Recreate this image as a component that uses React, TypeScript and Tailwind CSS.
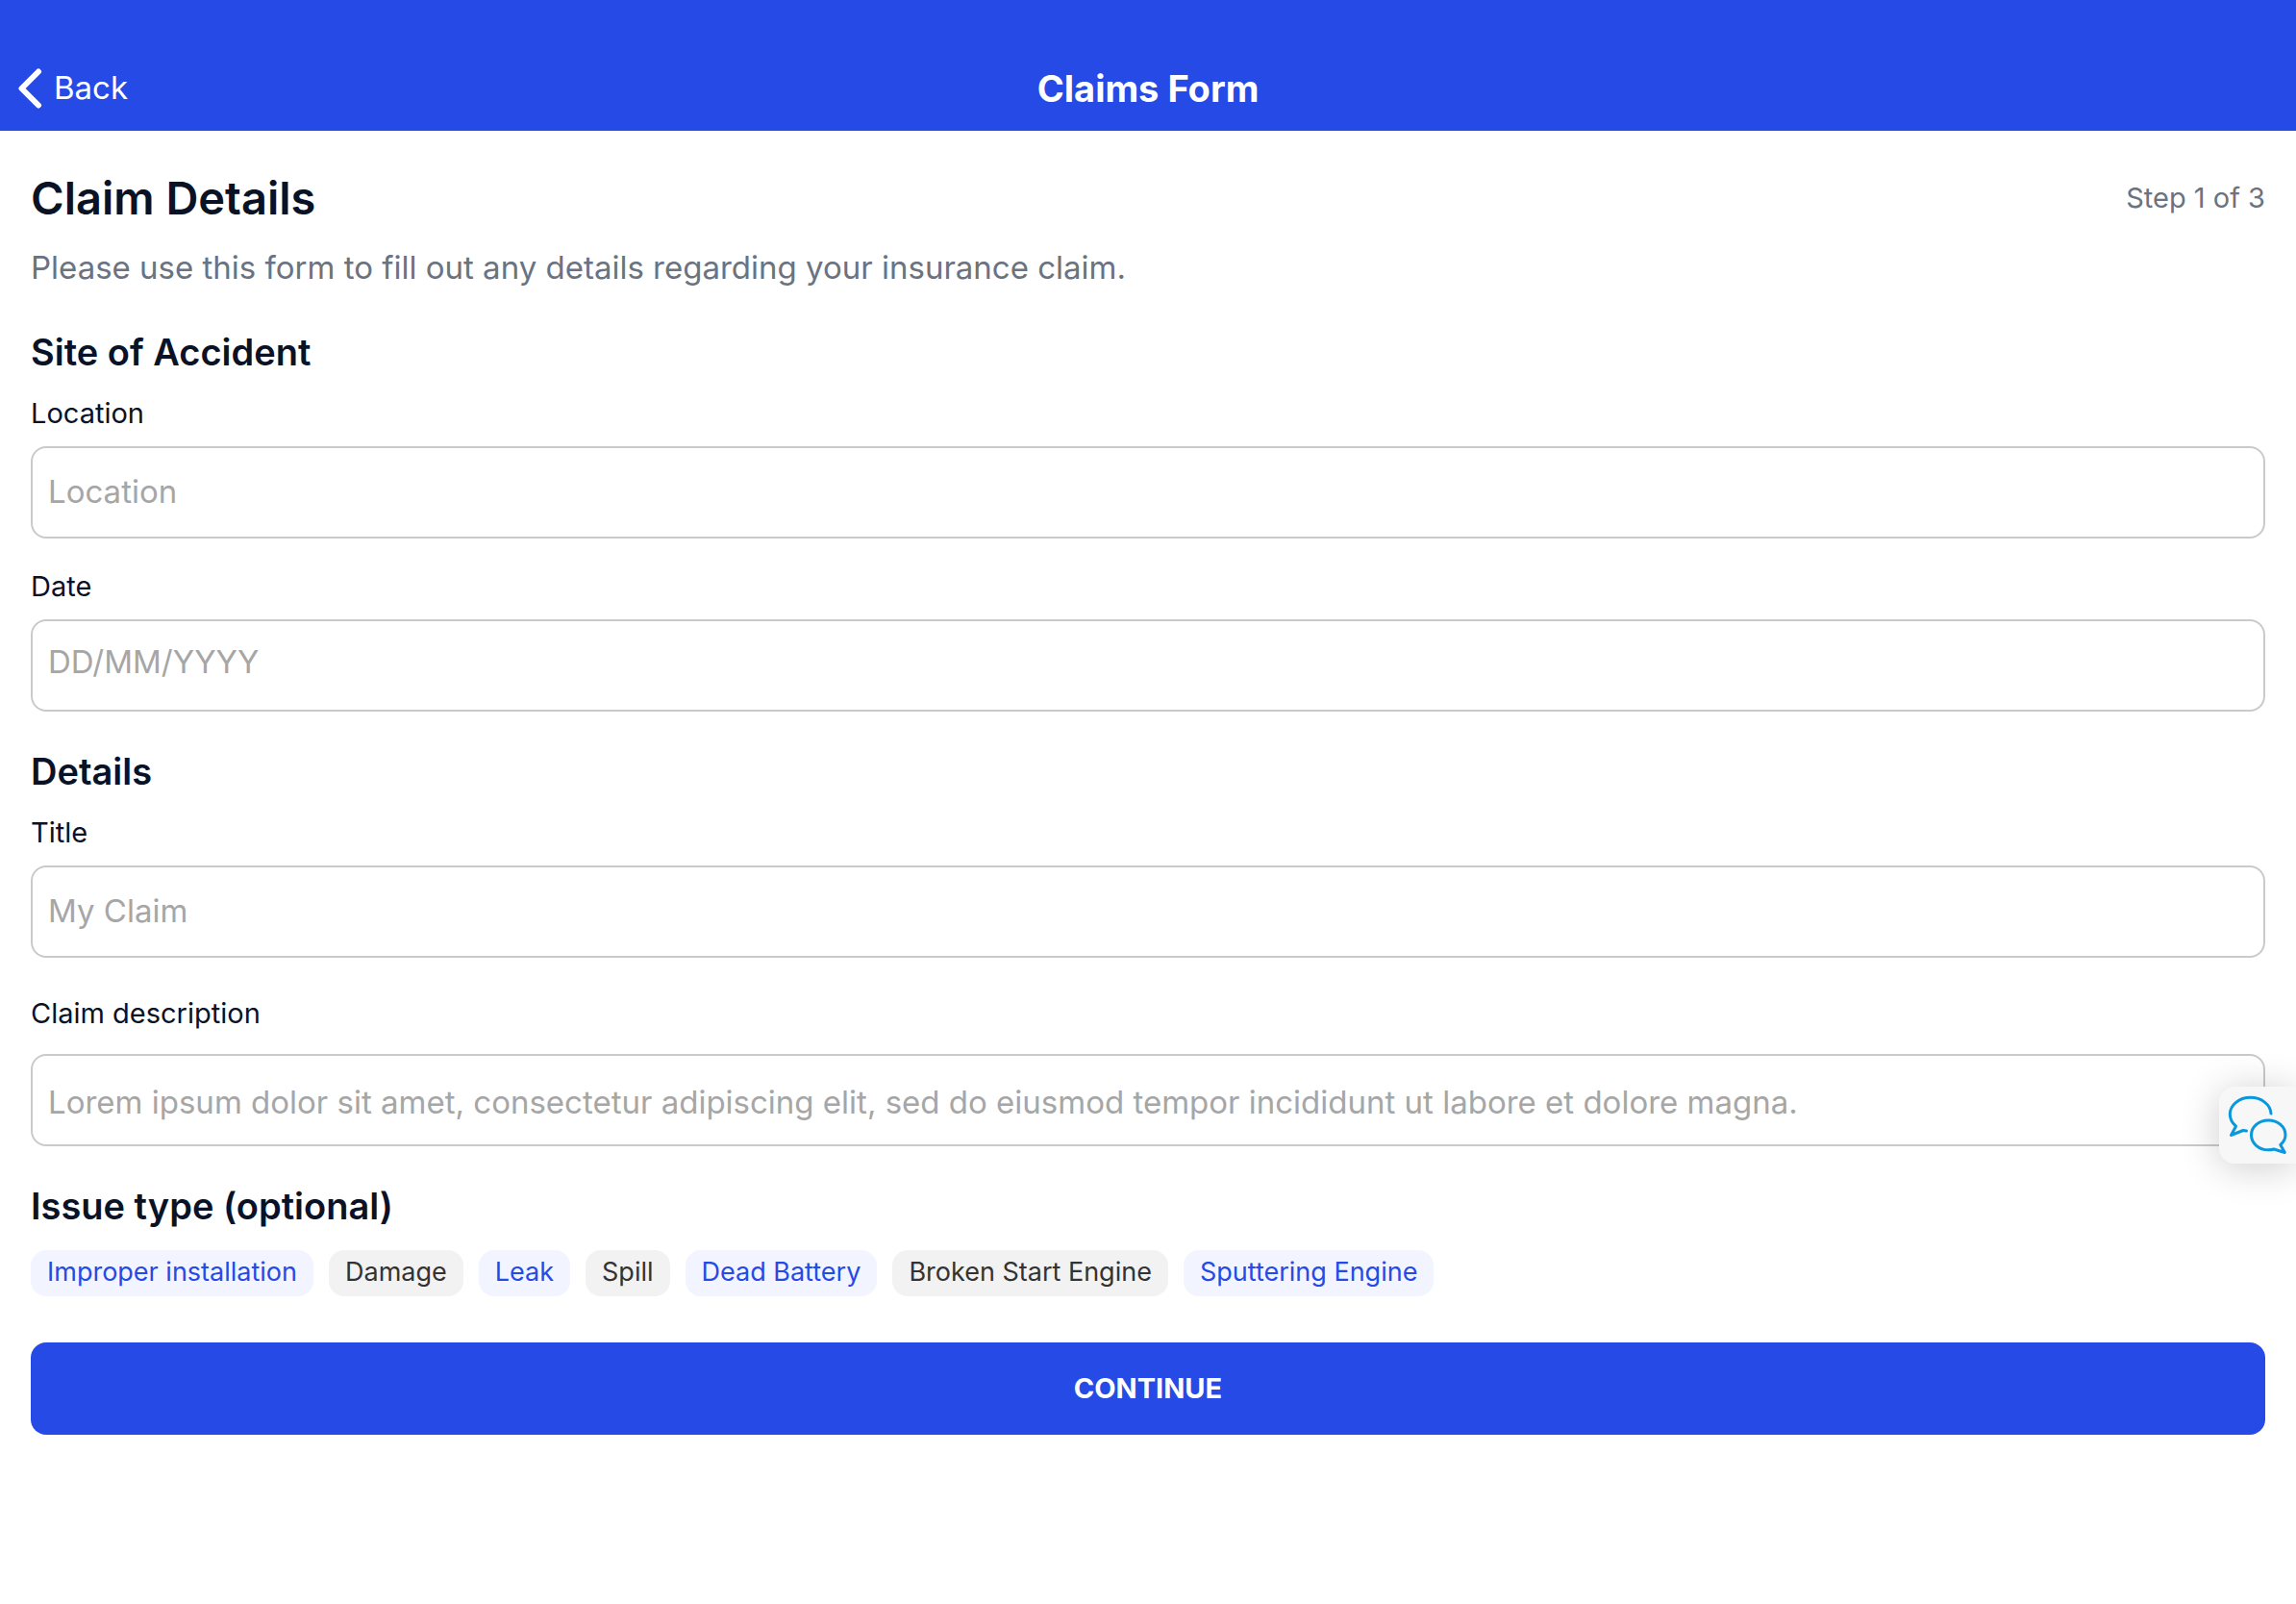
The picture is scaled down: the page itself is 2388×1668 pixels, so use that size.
import { useId } from "react";

const issues = [
  { label: "Improper installation", selected: true },
  { label: "Damage", selected: false },
  { label: "Leak", selected: true },
  { label: "Spill", selected: false },
  { label: "Dead Battery", selected: true },
  { label: "Broken Start Engine", selected: false },
  { label: "Sputtering Engine", selected: true },
];

const fieldLayouts = {
  text: { wrapper: "flex flex-col gap-4", input: "pb-0.5" },
  date: { wrapper: "flex flex-col gap-4", input: "pb-2" },
  multiline: { wrapper: "flex flex-col gap-6 pt-2", input: "pt-1" },
};

type FieldProps = {
  label: string;
  placeholder: string;
  kind?: keyof typeof fieldLayouts;
};

function Field({ label, placeholder, kind = "text" }: FieldProps) {
  const id = useId();
  const layout = fieldLayouts[kind];
  return (
    <div className={layout.wrapper}>
      <label htmlFor={id} className="text-[29px] leading-[36px]">
        {label}
      </label>
      <input
        id={id}
        type="text"
        placeholder={placeholder}
        className={`h-24 w-full rounded-2xl border-2 border-[#cacaca] px-4 text-[33px] placeholder:text-[#a6a6a6] ${layout.input}`}
      />
    </div>
  );
}

function SectionTitle({ children }: { children: string }) {
  return <h3 className="mb-5 text-[38px] leading-[52px] font-semibold">{children}</h3>;
}

export default function App() {
  return (
    <div className="min-h-screen bg-white font-[Inter,sans-serif] text-[#0a1226]">
      <header className="grid grid-cols-3 items-center bg-[#254ae6] px-4 pt-12 text-white">
        <button type="button" className="flex h-22 items-center gap-3 justify-self-start text-[33px]">
          <svg width="28" height="42" viewBox="0 0 28 42" fill="none" stroke="currentColor" strokeWidth="6" strokeLinecap="round" strokeLinejoin="round" aria-hidden="true">
            <path d="M24 3.500 6.500 21l17.500 17.500" />
          </svg>
          Back
        </button>
        <h1 className="text-center text-[38px] font-bold">Claims Form</h1>
      </header>

      <main className="flex flex-col px-8 pt-10 pb-12">
        <div className="flex items-center justify-between">
          <h2 className="text-[47px] leading-[60px] font-semibold">Claim Details</h2>
          <p className="text-[29px] text-[#6b7280]">Step 1 of 3</p>
        </div>
        <p className="mt-5 text-[33px] leading-[44px] text-[#6b7280]">
          Please use this form to fill out any details regarding your insurance claim.
        </p>

        <section className="mt-10">
          <SectionTitle>Site of Accident</SectionTitle>
          <div className="flex flex-col gap-8">
            <Field label="Location" placeholder="Location" />
            <Field label="Date" placeholder="DD/MM/YYYY" kind="date" />
          </div>
        </section>

        <section className="mt-9">
          <SectionTitle>Details</SectionTitle>
          <div className="flex flex-col gap-8">
            <Field label="Title" placeholder="My Claim" />
            <Field
              label="Claim description"
              placeholder="Lorem ipsum dolor sit amet, consectetur adipiscing elit, sed do eiusmod tempor incididunt ut labore et dolore magna."
              kind="multiline"
            />
          </div>
        </section>

        <section className="mt-9">
          <SectionTitle>Issue type (optional)</SectionTitle>
          <div className="flex flex-wrap gap-4">
            {issues.map(({ label, selected }) => (
              <button
                key={label}
                type="button"
                aria-pressed={selected}
                className={`h-12 rounded-2xl px-[17px] pb-0.5 text-[27px] ${selected ? "bg-[#f2f5ff] text-[#254ae6]" : "bg-[#f2f2f2] text-[#333333]"}`}
              >
                {label}
              </button>
            ))}
          </div>
        </section>

        <button type="button" className="mt-12 h-24 w-full rounded-2xl bg-[#254ae6] text-[29px] font-bold text-white">
          CONTINUE
        </button>
      </main>

      <button
        type="button"
        aria-label="Open chat"
        className="absolute top-[1130px] right-0 size-20 rounded-l-2xl bg-[#f7f7f7] shadow-[0_4px_40px_rgba(0,0,0,0.2)]"
      >
        <svg viewBox="0 0 80 80" className="size-20" fill="none" stroke="#0a98dc" strokeWidth="3" strokeLinecap="round" strokeLinejoin="round" aria-hidden="true">
          <path d="M54 28C53.500 18.500 44 11.300 32.500 11.300S11.300 19 11.300 28.800c0 4.700 2.300 9 6.200 12.400l-5 9.300 12.500-5 3.500.6" />
          <path d="M57 65c-1.800.5-3.700.8-5.700.8-9.900 0-17.800-6.900-17.800-15.500S41.400 35 51.300 35s17.700 6.800 17.700 15.300c0 4-2 7.500-5.200 10.200l4.500 8z" />
        </svg>
      </button>
    </div>
  );
}
